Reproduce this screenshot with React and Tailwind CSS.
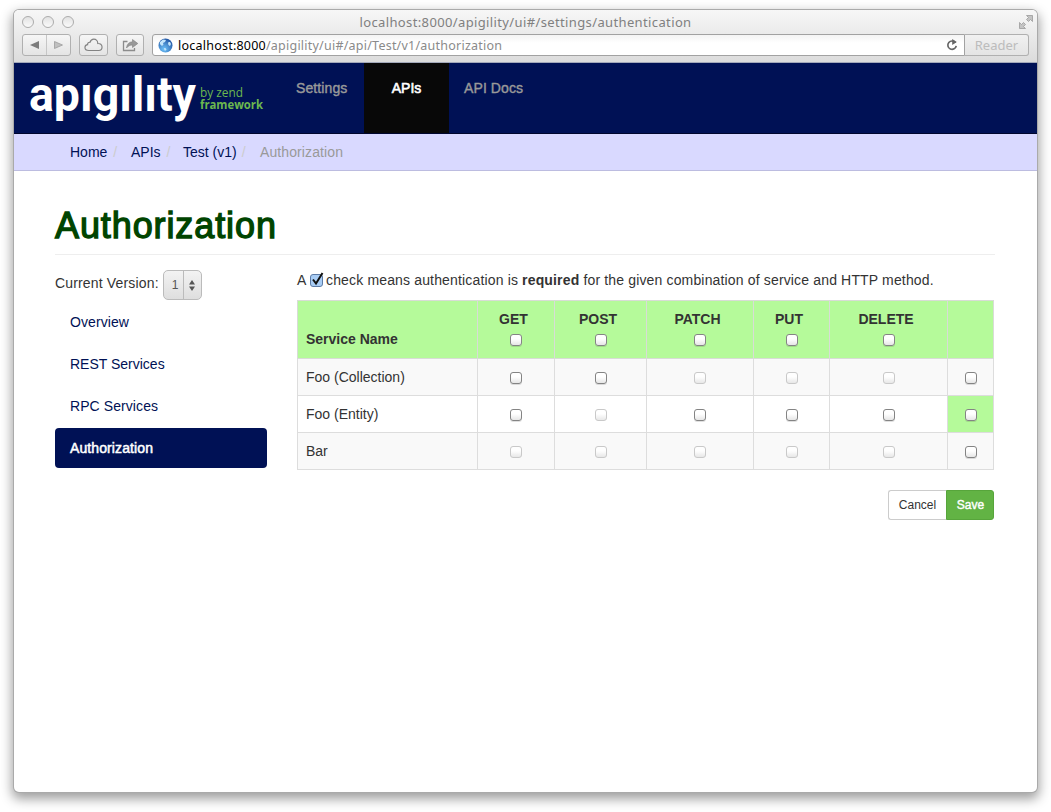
import React from "react";

const methods = ["GET", "POST", "PATCH", "PUT", "DELETE"];
const rows = [
  { name: "Foo (Collection)", on: [true, true, false, false, false] },
  { name: "Foo (Entity)", on: [true, false, true, true, true], mark: true },
  { name: "Bar", on: [false, false, false, false, false] },
];

function Box({ disabled }) {
  return (
    <span
      className={
        "block h-3 w-3 rounded-[3px] border bg-linear-to-b from-white from-40% to-[#e6e6e6] " +
        (disabled ? "border-[#c4c4c4] opacity-90" : "border-[#848484] shadow-[0_1px_0_rgba(0,0,0,0.12)]")
      }
    />
  );
}

function Toolbar() {
  const btn = "flex h-[22px] items-center justify-center rounded-[3px] border border-[#b0b0b0] bg-linear-to-b from-[#f6f6f6] to-[#e4e4e4]";
  return (
    <div className="flex h-[53px] shrink-0 flex-col border-b border-[#a3a9ba] bg-linear-to-b from-[#f7f7f7] to-[#dcdcdc]">
      <div className="flex h-[24px] items-center pr-[3px] pl-2">
        <div className="flex w-[60px] gap-2">
          {[0, 1, 2].map((i) => (
            <span key={i} className="h-3 w-3 rounded-full border border-[#acacac] bg-linear-to-b from-[#e2e2e2] to-[#fafafa]" />
          ))}
        </div>
        <div className="flex-1 pr-[49px] text-center font-['Noto_Sans',sans-serif] text-[13px] leading-[22px] tracking-[0.37px] text-[#808080]">
          localhost:8000/apigility/ui#/settings/authentication
        </div>
        <svg className="h-4 w-4" viewBox="0 0 16 16" fill="#c4c4c4" stroke="#9a9a9a" strokeWidth=".8">
          <path d="M8.500 1.500h6v6l-2-2-2 2-2-2 2-2zM1.500 8.500l2 2 2-2 2 2-2 2 2 2h-6z" />
        </svg>
      </div>
      <div className="flex items-center pr-2 pl-2">
        <div className={btn + " mr-2 w-[49px]"}>
          <span className="flex w-6 justify-center"><svg width="9" height="8" viewBox="0 0 9 8"><path d="M9 0v8L0 4z" fill="#7c7c7c" /></svg></span>
          <span className="h-5 w-px bg-[#c6c6c6]" />
          <span className="flex w-6 justify-center"><svg width="9" height="8" viewBox="0 0 9 8"><path d="M.5 .5v7l8-3.500z" fill="#c0c0c0" stroke="#9c9c9c" strokeWidth=".8" /></svg></span>
        </div>
        <div className={btn + " mr-2 w-[29px]"}>
          <svg width="20" height="14" viewBox="0 0 20 14" fill="none" stroke="#828282" strokeWidth="1.200"><path d="M5 12.500C2.500 12.500 1 11.200 1 9.500 1 7.800 2.400 6.700 3.800 6.600 3.600 5 5 4 6.300 4.300 7 2.300 8.500 1.200 10.300 1.200c2.500 0 4.200 2 4.200 4.300 2.500-.2 4.500 1.300 4.500 3.500 0 2-1.500 3.500-3.500 3.500z" transform="scale(.95 1)" /></svg>
        </div>
        <div className={btn + " mr-2 w-[28px]"}>
          <svg width="17" height="13" viewBox="0 0 17 13"><path d="M5.500 2.500H1.500v9h11V9" fill="none" stroke="#8c8c8c" strokeWidth="1.300" /><path d="M10.500 .5L15.800 4.500l-5.300 4V6C8 6 6 7 4.500 9 5 5 7 3 10.500 2.800z" fill="#999" stroke="#808080" strokeWidth=".6" /></svg>
        </div>
        <div className="flex h-[22px] flex-1 items-center rounded-l-[3px] border border-[#a2a2a2] bg-linear-to-b from-[#f4f4f4] to-white to-40% pr-[6px] pl-[5px]">
          <svg width="15" height="15" viewBox="0 0 15 15">
            <defs><radialGradient id="globe" cx=".4" cy=".75" r=".8"><stop offset="0" stopColor="#6fc4fa" /><stop offset="1" stopColor="#1d4f9f" /></radialGradient></defs>
            <circle cx="7.500" cy="7.500" r="7" fill="url(#globe)" />
            <path d="M2 4l3-2.500 3 .5-1 2-2 1 .5 1.500L4 8 1.800 6zM10.500 4l1.500 0 1 2-1 2-1-.5L10 6zM6 10l1.800.2.700 1.200-1.500 1.500-.8-1.400z" fill="#c4e6fb" />
          </svg>
          <div className="flex-1 pt-px pl-[5px] font-['Noto_Sans',sans-serif] text-[12.5px] leading-5 tracking-[0.23px] text-[#8a8a8a]">
            <span className="text-black">localhost:8000</span>/apigility/ui#/api/Test/v1/authorization
          </div>
          <svg width="12" height="12" viewBox="0 0 12 12"><path d="M9.500 3.800A4.200 4.200 0 1 0 10.200 6.800" fill="none" stroke="#666" strokeWidth="1.700" /><path d="M6.200 0v6L10.800 3z" fill="#666" /></svg>
        </div>
        <div className="flex h-[22px] w-[64px] items-center justify-center rounded-r-[3px] border border-l-0 border-[#b0b0b0] bg-linear-to-b from-[#f1f1f1] to-[#e4e4e4] font-['Noto_Sans',sans-serif] text-[13px] text-[#bcbcbc]">
          Reader
        </div>
      </div>
    </div>
  );
}

function Logo() {
  return (
    <svg className="h-[70px] w-[267px] shrink-0" viewBox="0 0 267 70" aria-label="apigility by zend framework">
      <text x="15" y="48" fontFamily="Roboto, sans-serif" fontWeight="700" fontSize="49" fill="#fff" textLength="167" lengthAdjust="spacingAndGlyphs">apıgılıty</text>
      <text x="186" y="34" fontFamily="Open Sans, sans-serif" fontSize="12" fill="#6cb84e" textLength="43" lengthAdjust="spacingAndGlyphs">by zend</text>
      <text x="186" y="46" fontFamily="Open Sans, sans-serif" fontWeight="700" fontSize="12" fill="#6cb84e" textLength="63" lengthAdjust="spacingAndGlyphs">framework</text>
    </svg>
  );
}

export default function App() {
  return (
    <div className="h-[812px] w-[1051px] overflow-hidden bg-white pt-[10px] pl-[14px] font-['Liberation_Sans',Arial,sans-serif] text-sm text-[#333]">
      <div className="flex h-[782px] w-[1023px] flex-col overflow-hidden rounded-[5px] bg-white shadow-[0_0_0_1px_#aaa,0_5px_12px_2px_rgba(0,0,0,0.38)]">
        <Toolbar />
        <nav className="flex h-[71px] shrink-0 border-b border-[#00062e] bg-[#001155]">
          <Logo />
          <a className="w-[83px] pt-[15px] pl-[15px] leading-5 tracking-[0.1px] text-[#999] [-webkit-text-stroke:0.4px_#999]">Settings</a>
          <a className="w-[85px] bg-[#080808] pt-[15px] text-center leading-5 text-white [-webkit-text-stroke:0.6px_white]">APIs</a>
          <a className="pt-[15px] pl-[15px] leading-5 tracking-[0.1px] text-[#999] [-webkit-text-stroke:0.4px_#999]">API Docs</a>
        </nav>
        <div className="flex h-[37px] shrink-0 items-center border-b border-[#bcbce0] bg-[#d9d9ff] pl-[56px] leading-5 text-[#001155]">
          <span className="w-[61px]">Home<span className="pl-[6px] text-[#ccc]">/</span></span>
          <span className="w-[52px]">APIs<span className="pl-[6px] text-[#ccc]">/</span></span>
          <span className="w-[77px]">Test (v1)<span className="pl-[5px] text-[#ccc]">/</span></span>
          <span className="tracking-[0.1px] text-[#999]">Authorization</span>
        </div>
        <main className="w-[981px] pl-[41px]">
          <h1 className="h-[84px] border-b border-[#eee] pt-[35px] text-[36px] leading-10 font-medium tracking-[0.9px] text-[#004400] [-webkit-text-stroke:1.3px_#004400]">Authorization</h1>
          <div className="flex pt-[15px]">
            <aside className="w-[242px] pr-[30px]">
              <div className="flex h-[32px] items-start">
                <span className="w-[108px] pt-[3px] leading-5 tracking-[0.16px]">Current Version:</span>
                <div className="flex h-[30px] w-[39px] items-center rounded-[5px] border border-[#bbb] bg-linear-to-b from-[#f3f3f3] to-[#dedede] text-xs text-[#555]">
                  <span className="w-[19px] shrink-0 pl-[3px] text-center">1</span>
                  <span className="h-full w-px bg-[#bbb]" />
                  <svg className="ml-[5px]" width="6" height="11" viewBox="0 0 6 11" fill="#555"><path d="M0 4.500L3 0l3 4.500zM0 6.500h6L3 11z" /></svg>
                </div>
              </div>
              <div className="flex flex-col gap-[2px] text-[#001155]">
                <a className="h-10 px-[15px] leading-10 tracking-[0.08px]">Overview</a>
                <a className="h-10 px-[15px] leading-10">REST Services</a>
                <a className="h-10 px-[15px] leading-10 tracking-[0.08px]">RPC Services</a>
                <a className="h-10 rounded-[4px] bg-[#001155] px-[15px] leading-10 tracking-[0.1px] text-white [-webkit-text-stroke:0.5px_white]">Authorization</a>
              </div>
            </aside>
            <section className="w-[697px]">
              <p className="flex h-[30px] items-start leading-5">
                <span className="w-[13px]">A</span>
                <svg className="mt-[2px] mr-px shrink-0" width="15" height="15" viewBox="0 0 15 15">
                  <rect x=".5" y="2.500" width="12" height="12" rx="2.500" fill="#a9cdf5" stroke="#5c7ba6" />
                  <path d="M3 7.500l3 4L12.500 1" fill="none" stroke="#111" strokeWidth="2" />
                </svg>
                <span className="whitespace-nowrap tracking-[0.155px]">check means authentication is <b>required</b> for the given combination of service and HTTP method.</span>
              </p>
              <table className="w-[697px] table-fixed border-collapse leading-5">
                <colgroup>
                  <col className="w-[180px]" /><col className="w-[77px]" /><col className="w-[92px]" /><col className="w-[107px]" /><col className="w-[76px]" /><col className="w-[118px]" /><col className="w-[46px]" />
                </colgroup>
                <thead>
                  <tr className="h-[58px]">
                    <th className="border border-[#d8dcd6] bg-[#b5fa9a] pb-[9px] pl-2 text-left align-bottom">Service Name</th>
                    {methods.map((m) => (
                      <th key={m} className="border border-[#d8dcd6] bg-[#b5fa9a] pt-2 align-top">
                        <div className="-ml-[5px]">{m}</div>
                        <div className="mt-[5px] flex justify-center"><Box /></div>
                      </th>
                    ))}
                    <th className="border border-[#d8dcd6] bg-[#b5fa9a]" />
                  </tr>
                </thead>
                <tbody>
                  {rows.map((r, i) => (
                    <tr key={r.name} className={i % 2 ? "h-[37px] bg-white" : "h-[37px] bg-[#f9f9f9]"}>
                      <td className="border border-[#ddd] pl-2">{r.name}</td>
                      {r.on.map((v, j) => (
                        <td key={j} className="border border-[#ddd] pt-[2px]"><div className="flex justify-center"><Box disabled={!v} /></div></td>
                      ))}
                      <td className={"border border-[#ddd] pt-[2px] " + (r.mark ? "bg-[#b5fa9a]" : "")}><div className="flex justify-center"><Box /></div></td>
                    </tr>
                  ))}
                </tbody>
              </table>
              <div className="mt-5 flex justify-end text-xs leading-[28px]">
                <button className="h-[30px] w-[58px] rounded-l-[3px] border border-r-0 border-[#ccc] bg-white">Cancel</button>
                <button className="h-[30px] w-[48px] rounded-r-[3px] border border-[#57a53b] bg-[#62b344] pl-px text-white [-webkit-text-stroke:0.4px_white]">Save</button>
              </div>
            </section>
          </div>
        </main>
      </div>
    </div>
  );
}
